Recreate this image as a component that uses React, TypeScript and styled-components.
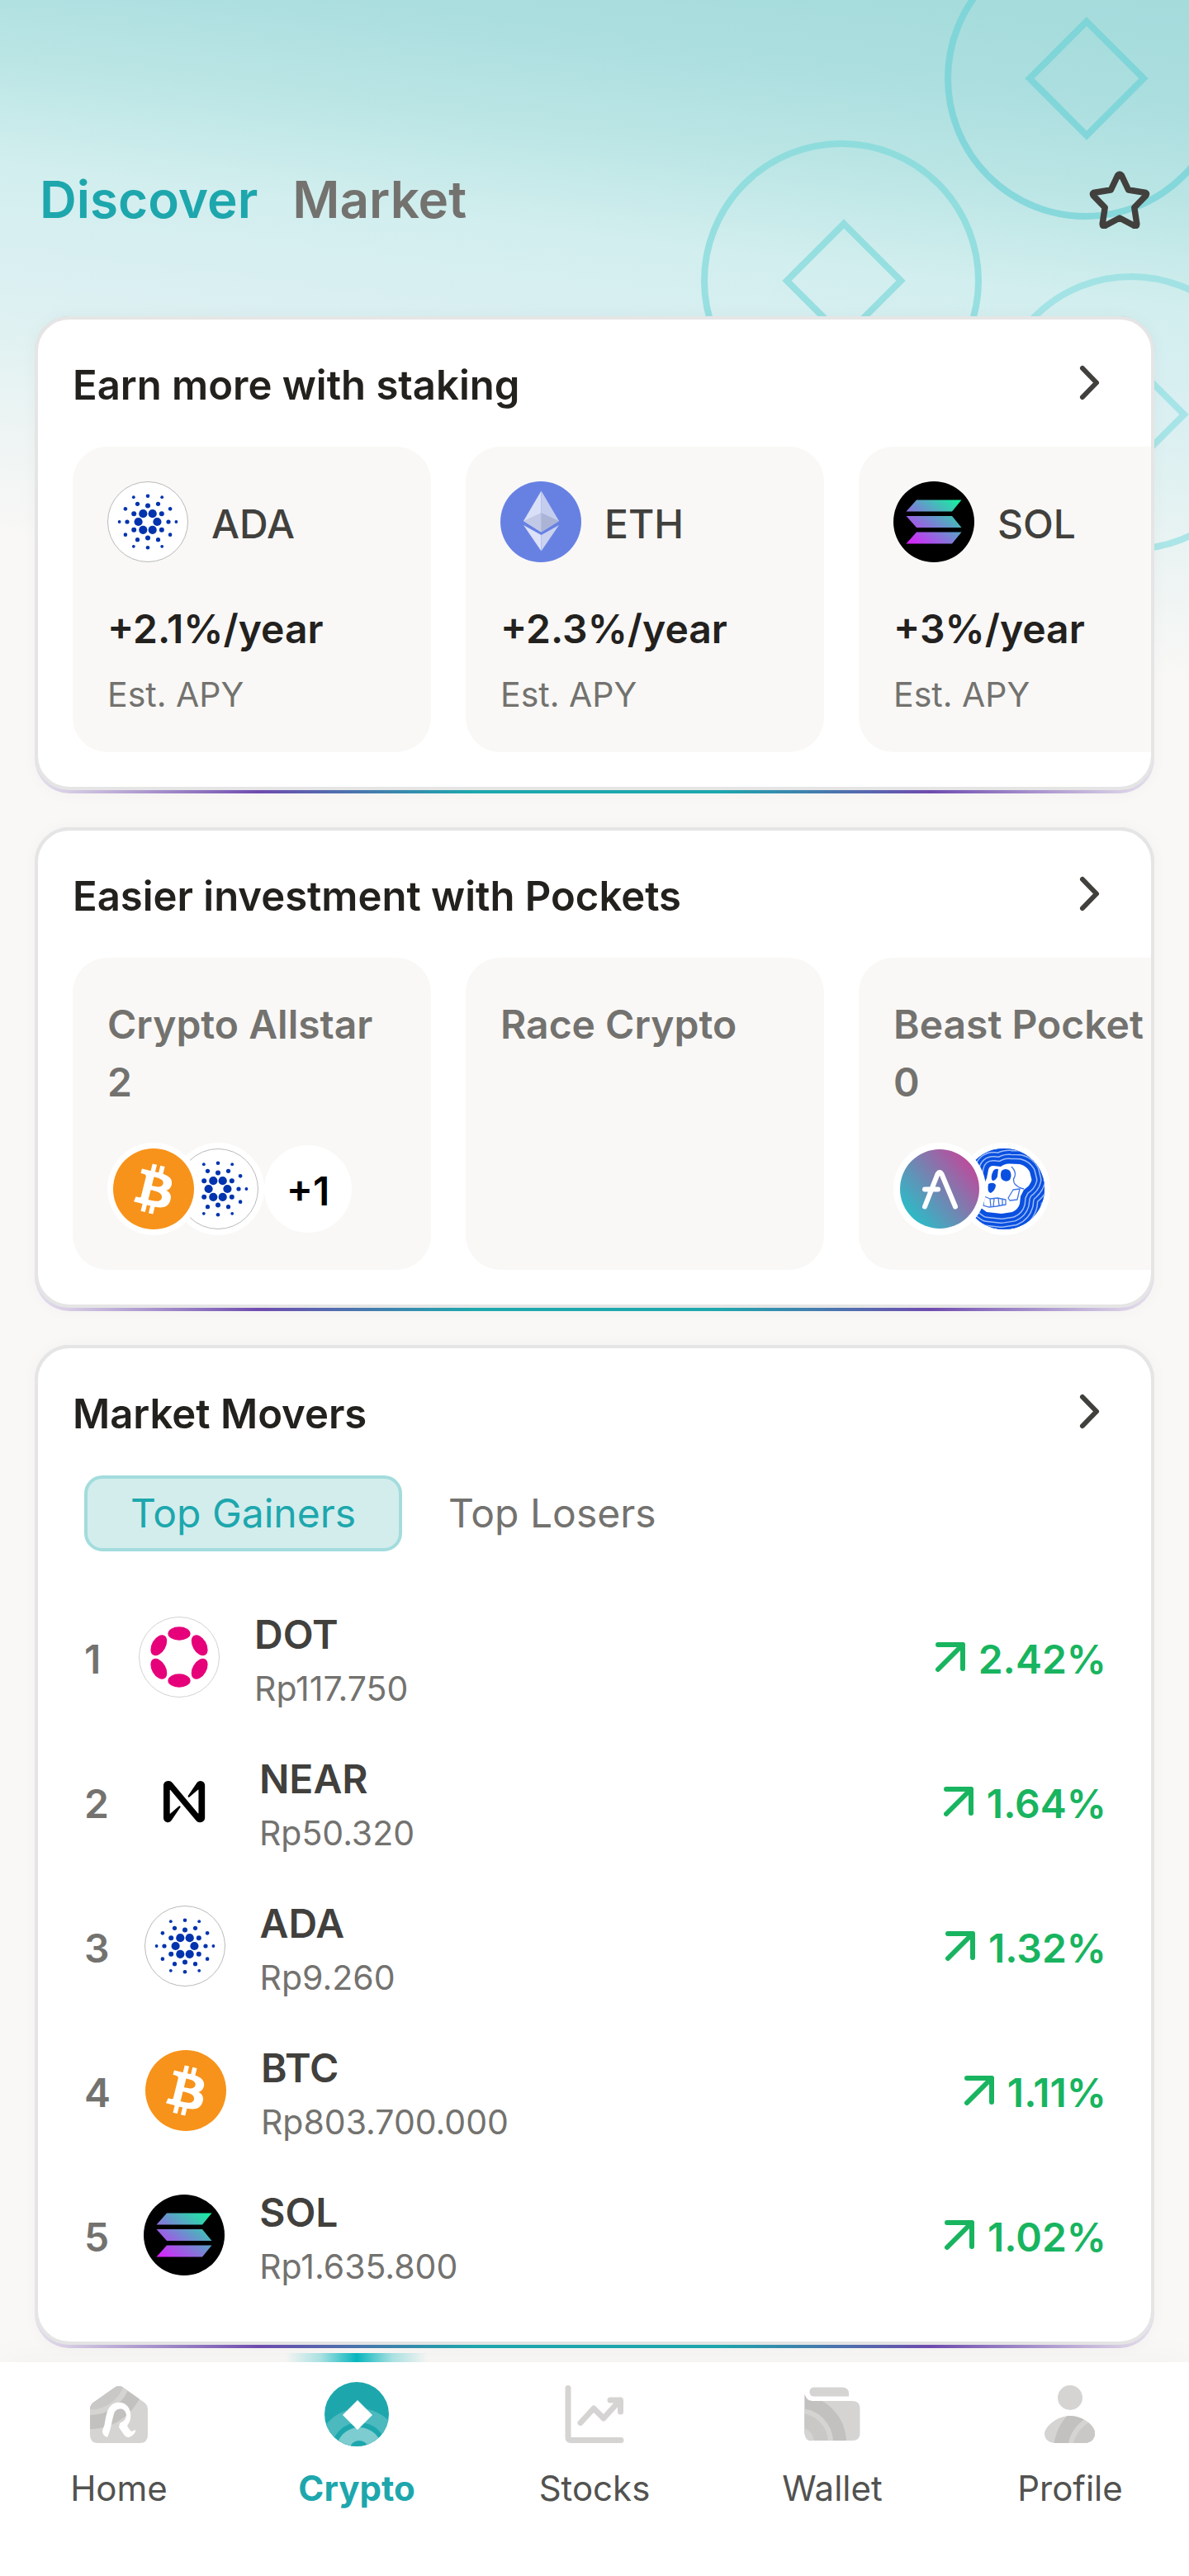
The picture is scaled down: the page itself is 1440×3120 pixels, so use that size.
import React, { useState } from "react";
import styled, { createGlobalStyle } from "styled-components";

const color = {
  page: "#f9f8f6",
  card: "#ffffff",
  tile: "#f9f8f6",
  line: "#e5e5e5",
  ink: "#23211e",
  strong: "#41403d",
  muted: "#73726f",
  nav: "#525250",
  teal: "#1da7ad",
  tealSoft: "#d3eded",
  tealLine: "#a3dcdd",
  green: "#18b45f",
  purple: "#6f4bb0",
};

const GlobalStyle = createGlobalStyle`
  *, *::before, *::after { box-sizing: border-box; }
  body {
    margin: 0;
    background: ${color.page};
    color: ${color.ink};
    font-family: Inter, "Liberation Sans", sans-serif;
    font-size: 48px;
    line-height: 70px;
  }
  h2, p, ul, ol { margin: 0; padding: 0; }
  ul, ol { list-style: none; }
  button { border: 0; padding: 0; background: none; font: inherit; color: inherit; cursor: pointer; }
  a { color: inherit; text-decoration: none; }
  svg { display: block; flex: none; }
`;

const Screen = styled.div`
  position: relative;
  display: flex;
  flex-direction: column;
  min-height: 100vh;
  overflow: hidden;
`;

const Backdrop = styled.div`
  position: absolute;
  top: 0;
  left: 0;
  right: 0;
  height: 860px;
  overflow: hidden;
  display: flex;
  justify-content: flex-end;
  background: linear-gradient(
    187deg,
    #a4dbdb 0%,
    #abdedf 12%,
    #bbe5e5 24%,
    #d2eeee 36%,
    #d9eff2 47%,
    #e0f1f1 56%,
    #ecf4f3 66%,
    #f9f8f6 80%
  );
`;

const TopBar = styled.header`
  position: relative;
  display: flex;
  align-items: center;
  justify-content: space-between;
  padding: 200px 47px 99px 48px;
`;

const ViewTabs = styled.nav`
  display: flex;
  gap: 42px;
`;

const ViewTab = styled.button<{ $active: boolean }>`
  font-size: 62px;
  line-height: 84px;
  font-weight: 600;
  color: ${(p) => (p.$active ? color.teal : color.muted)};
`;

const Main = styled.main`
  position: relative;
  flex: 1;
  display: flex;
  flex-direction: column;
  gap: 41px;
  padding: 0 42px 17px;
`;

const CardGlow = styled.section`
  padding-bottom: 4px;
  border-radius: 42px;
  background: linear-gradient(
    90deg,
    rgba(111, 75, 176, 0.15) 0%,
    rgba(111, 75, 176, 0.25) 3%,
    ${color.purple} 20%,
    ${color.teal} 39%,
    ${color.teal} 61%,
    ${color.purple} 80%,
    rgba(111, 75, 176, 0.25) 97%,
    rgba(111, 75, 176, 0.15) 100%
  );
  box-shadow: 0 0 20px rgba(0, 0, 0, 0.03);
`;

const CardBody = styled.div`
  overflow: hidden;
  padding: 42px 0 42px 42px;
  border: 4px solid ${color.line};
  border-radius: 42px;
  background: ${color.card};
`;

const CardHead = styled.div`
  display: flex;
  align-items: center;
  justify-content: space-between;
  padding-right: 42px;
  margin-bottom: 42px;
`;

const CardTitle = styled.h2`
  padding-top: 6px;
  font-size: 49px;
  line-height: 64px;
  font-weight: 600;
`;

const Track = styled.ul`
  display: flex;
  gap: 42px;
  overflow: hidden;
`;

const Tile = styled.li`
  flex: 0 0 434px;
  padding: 42px;
  border-radius: 42px;
  background: ${color.tile};
`;

const TileHead = styled.div`
  display: flex;
  align-items: center;
  gap: 28px;
  margin-bottom: 46px;
`;

const TileSymbol = styled.span`
  padding-top: 6px;
  font-weight: 500;
  color: ${color.strong};
`;

const Rate = styled.p`
  margin-bottom: 17px;
  font-weight: 600;
`;

const Caption = styled.p`
  font-size: 41px;
  line-height: 55px;
  color: ${color.muted};
`;

const PocketTile = styled(Tile)`
  display: flex;
  flex-direction: column;
  justify-content: space-between;
  height: 378px;
`;

const PocketName = styled.p`
  padding: 4px 16px 0 0;
  font-weight: 600;
  color: ${color.muted};
`;

const CoinStack = styled.div`
  display: flex;
  align-items: center;
  isolation: isolate;
`;

const StackedCoin = styled.span<{ $depth: number }>`
  position: relative;
  z-index: ${(p) => 10 - p.$depth};
  padding: 7px;
  border-radius: 50%;
  background: ${color.card};
  & + & { margin-left: -34px; }
`;

const MoreCoins = styled.span`
  display: grid;
  place-items: center;
  width: 106px;
  height: 106px;
  padding-top: 6px;
  border-radius: 50%;
  background: ${color.card};
  color: #000000;
  font-weight: 600;
`;

const MoverTabs = styled.div`
  display: flex;
  padding-left: 14px;
  margin-bottom: 66px;
`;

const MoverTab = styled.button<{ $active: boolean }>`
  padding: 10px 52px;
  border: 4px solid ${(p) => (p.$active ? color.tealLine : "transparent")};
  border-radius: 22px;
  background: ${(p) => (p.$active ? color.tealSoft : "transparent")};
  line-height: 64px;
  color: ${(p) => (p.$active ? color.teal : color.muted)};
`;

const MoverList = styled.ol`
  display: flex;
  flex-direction: column;
  gap: 45px;
  padding: 0 54px 19px 14px;
`;

const Mover = styled.li`
  display: flex;
  align-items: center;
`;

const Rank = styled.span`
  min-width: 24px;
  margin-right: 42px;
  font-weight: 600;
  color: ${color.muted};
`;

const MoverIcon = styled.span`
  margin-bottom: 6px;
`;

const MoverText = styled.div`
  flex: 1;
  margin-left: 42px;
`;

const MoverSymbol = styled.p`
  font-weight: 600;
  color: ${color.strong};
`;

const Price = styled.p`
  font-size: 41px;
  line-height: 60px;
  color: ${color.muted};
`;

const Change = styled.span`
  display: flex;
  align-items: center;
  gap: 16px;
  font-weight: 600;
  color: ${color.green};
`;

const BottomNav = styled.nav`
  position: relative;
  display: grid;
  grid-template-columns: repeat(5, 1fr);
  background: ${color.card};
  box-shadow: 0 -4px 40px rgba(0, 0, 0, 0.03);
`;

const NavItem = styled.a<{ $active?: boolean }>`
  position: relative;
  display: flex;
  flex-direction: column;
  align-items: center;
  gap: 20px;
  padding: 21px 0 78px;
  font-size: 42px;
  line-height: 56px;
  font-weight: ${(p) => (p.$active ? 700 : 400)};
  color: ${(p) => (p.$active ? color.teal : color.nav)};
  ${(p) =>
    p.$active &&
    `&::before {
      content: "";
      position: absolute;
      top: -11px;
      left: 50%;
      width: 172px;
      height: 11px;
      margin-left: -86px;
      background: linear-gradient(90deg, rgba(6,182,189,0) 0%, rgba(6,182,189,.32) 25%, #06b6bd 50%, rgba(6,182,189,.32) 75%, rgba(6,182,189,0) 100%);
    }`}
`;

/* ---------- drawings ---------- */

const CoinPattern = () => (
  <svg width="1440" height="860" viewBox="0 0 1440 860" fill="none" strokeWidth="8" aria-hidden="true">
    <g stroke="#6dd2d5" strokeOpacity="0.7">
      <circle cx="1315" cy="95" r="167" />
      <path d="M1316 26l69 69-69 69-69-69z" />
    </g>
    <g stroke="#7ed8da" strokeOpacity="0.7">
      <circle cx="1019" cy="340" r="166" />
      <path d="M1022 271l69 69-69 69-69-69z" />
    </g>
    <g stroke="#8bdde0" strokeOpacity="0.65">
      <circle cx="1370" cy="500" r="165" />
      <path d="M1365 433l69 69-69 69-69-69z" />
    </g>
  </svg>
);

const StarIcon = () => (
  <svg width="74" height="70" viewBox="0 0 74 70" fill="none" stroke={color.strong} strokeWidth="7.5" strokeLinejoin="round" aria-hidden="true">
    <path d="M34.6 5.6Q37 2.4 39.4 5.6L47.6 23 67.4 26.2Q71 27 68.6 30.2L54.8 44.3 57.8 64Q58 67.8 54.4 66.2L37 57 19.6 66.2Q16 67.8 16.2 64L19.2 44.3 5.4 30.2Q3 27 6.6 26.2L26.4 23Z" />
  </svg>
);

const ChevronIcon = () => (
  <svg width="70" height="70" viewBox="0 0 70 70" fill="none" stroke={color.strong} strokeWidth="6" strokeLinecap="round" strokeLinejoin="round" aria-hidden="true">
    <path d="M29 17l17 17.500-17 17.500" />
  </svg>
);

const RiseIcon = () => (
  <svg width="36" height="42" viewBox="0 0 36 42" fill="none" stroke="currentColor" strokeWidth="6" strokeLinecap="round" strokeLinejoin="round" aria-hidden="true">
    <path d="M3 33L33 3M3 3h30v29" />
  </svg>
);

const adaRings = [
  { count: 6, distance: 11.4, size: 5.1, start: 0 },
  { count: 6, distance: 19.4, size: 3, start: 30 },
  { count: 6, distance: 25, size: 2.6, start: 0 },
  { count: 6, distance: 31.3, size: 2.3, start: 30 },
  { count: 6, distance: 34.4, size: 1.9, start: 0 },
];

const Ada = () => (
  <>
    <circle cx="49" cy="49" r="48.500" fill="#fff" stroke="#b9b9b9" />
    {adaRings.flatMap((ring, r) =>
      Array.from({ length: ring.count }, (_, i) => {
        const a = ((ring.start + i * 60) * Math.PI) / 180;
        return (
          <circle
            key={`${r}-${i}`}
            cx={49 + ring.distance * Math.cos(a)}
            cy={49 + ring.distance * Math.sin(a)}
            r={ring.size}
            fill="#0033ad"
          />
        );
      })
    )}
  </>
);

const Eth = () => (
  <>
    <circle cx="49" cy="49" r="49" fill="#6781e3" />
    <path d="M49.500 11.500L28 48l21.500 13.500z" fill="#d9dff6" />
    <path d="M49.500 11.500L71 48 49.500 61.500z" fill="#c5cdef" />
    <path d="M28 48l21.500-10v23.500z" fill="#c2c9e6" />
    <path d="M71 48l-21.500-10v23.500z" fill="#acb4d6" />
    <path d="M28 53l21.500 12v19.500z" fill="#dde2f8" />
    <path d="M71 53L49.500 65v19.500z" fill="#cad2ef" />
  </>
);

const Sol = () => (
  <>
    <defs>
      <linearGradient id="sol" gradientUnits="userSpaceOnUse" x1="24" y1="82" x2="76" y2="16">
        <stop offset="0" stopColor="#e01bff" />
        <stop offset="0.5" stopColor="#6f8cd0" />
        <stop offset="1" stopColor="#0dfa9b" />
      </linearGradient>
    </defs>
    <circle cx="49" cy="49" r="49" fill="#000" />
    <path d="M28 22.500h54.500L71 36.500H15.500zM15.500 42H71l11.500 14H28zM28 61.500h54.500L71 75.500H15.500z" fill="url(#sol)" />
  </>
);

const Btc = () => (
  <>
    <circle cx="49" cy="49" r="49" fill="#f7931a" />
    <path
      transform="scale(3.0625)"
      fill="#fff"
      d="M23.189 14.02c.314-2.096-1.283-3.223-3.465-3.975l.708-2.84-1.728-.43-.69 2.765c-.454-.114-.92-.22-1.385-.326l.695-2.783L15.596 6l-.708 2.839c-.376-.086-.746-.17-1.104-.26l.002-.009-2.384-.595-.46 1.846s1.283.294 1.256.312c.7.175.826.638.805 1.006l-.806 3.235c.048.012.11.03.18.057l-.183-.045-1.13 4.532c-.086.212-.303.531-.793.41.018.025-1.256-.313-1.256-.313l-.858 1.978 2.25.561c.418.105.828.215 1.231.318l-.715 2.872 1.727.43.708-2.84c.472.127.93.245 1.378.357l-.706 2.828 1.728.43.715-2.866c2.948.558 5.164.333 6.097-2.333.752-2.146-.037-3.385-1.588-4.192 1.13-.26 1.98-1.003 2.207-2.538zm-3.95 5.538c-.533 2.147-4.148.986-5.32.695l.95-3.805c1.172.293 4.929.872 4.37 3.11zm.535-5.569c-.487 1.953-3.495.96-4.47.717l.86-3.45c.975.243 4.118.696 3.61 2.733z"
    />
  </>
);

const Dot = () => (
  <>
    <circle cx="49" cy="49" r="48.500" fill="#fff" stroke="#d2d2d2" />
    {[0, 60, 120, 180, 240, 300].map((turn) => (
      <ellipse key={turn} cx="49" cy="20.500" rx="13.600" ry="8.300" fill="#e6007a" transform={`rotate(${turn} 49 49)`} />
    ))}
  </>
);

const Near = () => (
  <>
    <circle cx="49" cy="49" r="49" fill="#fff" />
    <path
      transform="translate(24 24) scale(2.09)"
      fill="#000"
      d="M21.443 0c-.89 0-1.714.46-2.18 1.218l-5.017 7.448a.533.533 0 0 0 .792.7l4.938-4.282a.2.2 0 0 1 .334.151v13.41a.2.2 0 0 1-.354.128L5.03.905A2.555 2.555 0 0 0 3.078 0h-.521A2.557 2.557 0 0 0 0 2.557v18.886a2.557 2.557 0 0 0 4.736 1.338l5.017-7.448a.533.533 0 0 0-.792-.7l-4.938 4.283a.2.2 0 0 1-.333-.152V5.352a.2.2 0 0 1 .354-.128l14.924 17.87c.486.574 1.2.905 1.952.906h.521A2.558 2.558 0 0 0 24 21.445V2.557A2.558 2.558 0 0 0 21.443 0Z"
    />
  </>
);

const Aave = () => (
  <>
    <defs>
      <linearGradient id="aave" x1="0.12" y1="0.82" x2="0.86" y2="0.2">
        <stop offset="0" stopColor="#2ebac6" />
        <stop offset="1" stopColor="#b6509e" />
      </linearGradient>
    </defs>
    <circle cx="49" cy="49" r="48" fill="url(#aave)" />
    <path d="M31 70.500L46.500 31q2.500-4 5 0L68 70.500M31 49.500h16" fill="none" stroke="#fff" strokeWidth="6" strokeLinecap="round" strokeLinejoin="round" />
  </>
);

const skull =
  "M28 36L30 26Q31 21 36 21L45 22Q50 18 56 18.500L68 19Q76 21 80 28L82.500 38Q81 45 73 50L69 58 68 67Q66 74 59 77L46 79 28 77 21 72 19 56Z";

const Ape = () => (
  <>
    <defs>
      <clipPath id="ape">
        <circle cx="49" cy="49" r="49" />
      </clipPath>
    </defs>
    <g clipPath="url(#ape)" strokeLinejoin="round">
      <circle cx="49" cy="49" r="49" fill="#0a50e0" />
      {[64, 54, 44, 34, 24, 14].map((w) => (
        <React.Fragment key={w}>
          <path d={skull} fill="none" stroke="#9dbcf6" strokeWidth={w} />
          <path d={skull} fill="none" stroke="#0a50e0" strokeWidth={w - 3} />
        </React.Fragment>
      ))}
      <path d={skull} fill="#fff" />
      <path d="M36 27q2-3 6-2l-1 9q-2 5-6 5-3-4 1-12zM46 27q5-4 10 0 3 6 0 11-5 4-10-1-2-5 0-10zM30 43q6-3 9 1 0 6-6 10-5-1-3-11z" fill="#0a50e0" />
      <g fill="none" stroke="#3f74e6" strokeWidth="1.300">
        <path d="M58 22q6 6 4 12-3 4 0 9 5 5 11 6M54 60l6-10 8-1-3 13-9 1zM25 58l7 3 9-1 10 2v6l-11 2-9 1-7-2zM32 61l1 9M37 61l-1 9M42 60l1 9M47 61v7" />
      </g>
    </g>
  </>
);

const coins = { ADA: Ada, ETH: Eth, SOL: Sol, BTC: Btc, DOT: Dot, NEAR: Near, AAVE: Aave, APE: Ape };
type CoinName = keyof typeof coins;

const Coin = ({ name }: { name: CoinName }) => {
  const Art = coins[name];
  return (
    <svg width="98" height="98" viewBox="0 0 98 98" role="img" aria-label={name}>
      <Art />
    </svg>
  );
};

const shade = { base: "#d5d4d2", deep: "#c2c1bf", mid: "#c9c8c6" };

const HomeArt = () => (
  <>
    <defs>
      <clipPath id="house">
        <path d="M36.500 10Q42 6 47.500 10L73 28Q77 31 77 37V67Q77 77 67 77H17Q7 77 7 67V37Q7 31 11 28Z" />
      </clipPath>
    </defs>
    <g clipPath="url(#house)">
      <rect width="84" height="84" fill={shade.base} />
      <circle cx="7" cy="-7" r="67" fill={shade.deep} />
      <circle cx="7" cy="-7" r="50" fill={shade.base} />
      <circle cx="7" cy="-7" r="43.500" fill={shade.mid} />
    </g>
    <path d="M24.500 55C26 47 27 38 31 33 36 26 48 26 53 33 58 40 57 50 52.500 55Q52 56 53 58L57 63 62 61Q63 64 58 68 53 72 49 68L42 58 43 53Q51 50 51 43C50 35 42 33 37 39 34 45 33 60 28 70Q22 68 22 62Z" fill="#fff" />
  </>
);

const CryptoArt = () => (
  <>
    <defs>
      <clipPath id="disc">
        <circle cx="42" cy="42" r="39" />
      </clipPath>
    </defs>
    <g clipPath="url(#disc)">
      <rect width="84" height="84" fill={color.teal} />
      <circle cx="45" cy="86" r="51" fill="#4bb9be" />
      <circle cx="45" cy="86" r="34" fill={color.teal} />
      <circle cx="45" cy="86" r="28" fill="#7dcccf" />
      <circle cx="45" cy="86" r="12" fill={color.teal} />
    </g>
    <path d="M43 25l18 18-18 18-18-18z" fill="#fff" />
  </>
);

const StocksArt = () => (
  <path
    d="M10 10.500V70q0 3.500 3.500 3.500H74M25 52.500L41 35l12 12 20-22M61 25h12.500v14"
    fill="none"
    stroke={shade.base}
    strokeWidth="7"
    strokeLinecap="round"
    strokeLinejoin="round"
  />
);

const WalletArt = () => (
  <>
    <defs>
      <clipPath id="wallet">
        <path d="M8.500 17Q10 26 18 26H66Q75.500 26 75.500 35V65Q75.500 74 66 74H18Q8.500 74 8.500 64Z" />
      </clipPath>
    </defs>
    <path d="M20 9.500H54Q62 9.500 62 17V20.500H20Q14.500 20.500 14.500 15T20 9.500Z" fill={shade.base} />
    <g clipPath="url(#wallet)">
      <rect width="84" height="84" fill={shade.base} />
      <circle cx="2" cy="76" r="57" fill={shade.deep} />
      <circle cx="2" cy="76" r="41" fill={shade.base} />
      <circle cx="2" cy="76" r="35" fill={shade.mid} />
      <circle cx="2" cy="76" r="18" fill={shade.base} />
    </g>
  </>
);

const ProfileArt = () => (
  <>
    <defs>
      <clipPath id="bust">
        <path d="M42 44C57 44 72 56 72 65 72 72 67 77 59 77H24C16 77 11 72 11 65 12 56 27 44 42 44Z" />
      </clipPath>
    </defs>
    <circle cx="42" cy="22" r="15" fill={shade.base} />
    <g clipPath="url(#bust)">
      <rect width="84" height="84" fill={shade.base} />
      <circle cx="84" cy="86" r="62" fill={shade.deep} />
      <circle cx="84" cy="86" r="45" fill={shade.base} />
      <circle cx="84" cy="86" r="39" fill={shade.mid} />
    </g>
  </>
);

/* ---------- data ---------- */

const staking: { coin: CoinName; rate: string }[] = [
  { coin: "ADA", rate: "+2.1%/year" },
  { coin: "ETH", rate: "+2.3%/year" },
  { coin: "SOL", rate: "+3%/year" },
];

const pockets: { name: string; coins: CoinName[]; more?: string }[] = [
  { name: "Crypto Allstar 2", coins: ["BTC", "ADA"], more: "+1" },
  { name: "Race Crypto", coins: [] },
  { name: "Beast Pocket 0", coins: ["AAVE", "APE"] },
];

const movers: { coin: CoinName; price: string; change: string }[] = [
  { coin: "DOT", price: "Rp117.750", change: "2.42%" },
  { coin: "NEAR", price: "Rp50.320", change: "1.64%" },
  { coin: "ADA", price: "Rp9.260", change: "1.32%" },
  { coin: "BTC", price: "Rp803.700.000", change: "1.11%" },
  { coin: "SOL", price: "Rp1.635.800", change: "1.02%" },
];

const destinations = [
  { label: "Home", Art: HomeArt },
  { label: "Crypto", Art: CryptoArt },
  { label: "Stocks", Art: StocksArt },
  { label: "Wallet", Art: WalletArt },
  { label: "Profile", Art: ProfileArt },
];

const Card = ({ title, children }: { title: string; children: React.ReactNode }) => (
  <CardGlow>
    <CardBody>
      <CardHead>
        <CardTitle>{title}</CardTitle>
        <button type="button" aria-label={`Open ${title}`}>
          <ChevronIcon />
        </button>
      </CardHead>
      {children}
    </CardBody>
  </CardGlow>
);

export default function App() {
  const [view, setView] = useState("Discover");
  const [tab, setTab] = useState("Top Gainers");

  return (
    <>
      <GlobalStyle />
      <Screen>
        <Backdrop>
          <CoinPattern />
        </Backdrop>

        <TopBar>
          <ViewTabs>
            {["Discover", "Market"].map((name) => (
              <ViewTab key={name} type="button" $active={view === name} onClick={() => setView(name)}>
                {name}
              </ViewTab>
            ))}
          </ViewTabs>
          <button type="button" aria-label="Favourites">
            <StarIcon />
          </button>
        </TopBar>

        <Main>
          <Card title="Earn more with staking">
            <Track>
              {staking.map((item) => (
                <Tile key={item.coin}>
                  <TileHead>
                    <Coin name={item.coin} />
                    <TileSymbol>{item.coin}</TileSymbol>
                  </TileHead>
                  <Rate>{item.rate}</Rate>
                  <Caption>Est. APY</Caption>
                </Tile>
              ))}
            </Track>
          </Card>

          <Card title="Easier investment with Pockets">
            <Track>
              {pockets.map((pocket) => (
                <PocketTile key={pocket.name}>
                  <PocketName>{pocket.name}</PocketName>
                  {pocket.coins.length > 0 && (
                    <CoinStack>
                      {pocket.coins.map((coin, i) => (
                        <StackedCoin key={coin} $depth={i}>
                          <Coin name={coin} />
                        </StackedCoin>
                      ))}
                      {pocket.more && <MoreCoins>{pocket.more}</MoreCoins>}
                    </CoinStack>
                  )}
                </PocketTile>
              ))}
            </Track>
          </Card>

          <Card title="Market Movers">
            <MoverTabs>
              {["Top Gainers", "Top Losers"].map((name) => (
                <MoverTab key={name} type="button" $active={tab === name} onClick={() => setTab(name)}>
                  {name}
                </MoverTab>
              ))}
            </MoverTabs>
            <MoverList>
              {movers.map((item, i) => (
                <Mover key={item.coin}>
                  <Rank>{i + 1}</Rank>
                  <MoverIcon>
                    <Coin name={item.coin} />
                  </MoverIcon>
                  <MoverText>
                    <MoverSymbol>{item.coin}</MoverSymbol>
                    <Price>{item.price}</Price>
                  </MoverText>
                  <Change>
                    <RiseIcon />
                    {item.change}
                  </Change>
                </Mover>
              ))}
            </MoverList>
          </Card>
        </Main>

        <BottomNav>
          {destinations.map(({ label, Art }) => (
            <NavItem key={label} href="#" $active={label === "Crypto"}>
              <svg width="84" height="84" viewBox="0 0 84 84" aria-hidden="true">
                <Art />
              </svg>
              {label}
            </NavItem>
          ))}
        </BottomNav>
      </Screen>
    </>
  );
}
